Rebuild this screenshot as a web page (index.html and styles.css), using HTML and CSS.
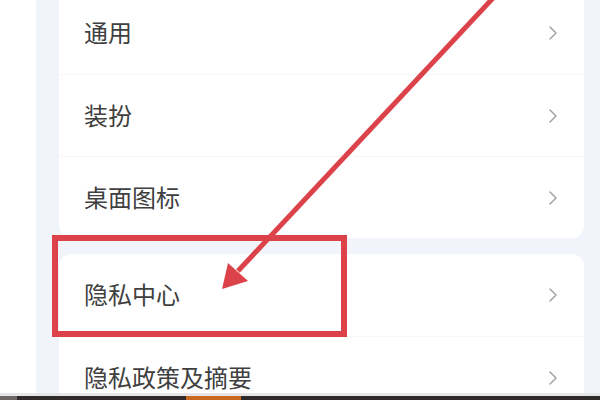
FILE: index.html
```
<!DOCTYPE html>
<html lang="zh-CN">
<head>
<meta charset="utf-8">
<link rel="stylesheet" href="styles.css">
</head>
<body>
<div class="frame">
  <div class="screen">
    <div class="edge"></div>
    <div class="content">
      <div class="card card-top">
        <div class="row"><span class="label">通用</span><svg class="chev" viewBox="0 0 8 14" width="8" height="14"><path d="M1 1 L7 7 L1 13" fill="none" stroke="#a3a3a3" stroke-width="1.5" stroke-linecap="round" stroke-linejoin="round"/></svg></div>
        <div class="row"><span class="label">装扮</span><svg class="chev" viewBox="0 0 8 14" width="8" height="14"><path d="M1 1 L7 7 L1 13" fill="none" stroke="#a3a3a3" stroke-width="1.5" stroke-linecap="round" stroke-linejoin="round"/></svg></div>
        <div class="row"><span class="label">桌面图标</span><svg class="chev" viewBox="0 0 8 14" width="8" height="14"><path d="M1 1 L7 7 L1 13" fill="none" stroke="#a3a3a3" stroke-width="1.5" stroke-linecap="round" stroke-linejoin="round"/></svg></div>
      </div>
      <div class="card">
        <div class="row"><span class="label">隐私中心</span><svg class="chev" viewBox="0 0 8 14" width="8" height="14"><path d="M1 1 L7 7 L1 13" fill="none" stroke="#a3a3a3" stroke-width="1.5" stroke-linecap="round" stroke-linejoin="round"/></svg></div>
        <div class="row"><span class="label">隐私政策及摘要</span><svg class="chev" viewBox="0 0 8 14" width="8" height="14"><path d="M1 1 L7 7 L1 13" fill="none" stroke="#a3a3a3" stroke-width="1.5" stroke-linecap="round" stroke-linejoin="round"/></svg></div>
      </div>
    </div>
    <svg class="annot" viewBox="0 0 600 393" width="600" height="393">
      <rect x="55" y="238" width="289" height="96" fill="none" stroke="#dc4249" stroke-width="6"/>
      <line x1="494" y1="-3" x2="238" y2="271" stroke="#dc4249" stroke-width="5"/>
      <polygon points="222,289 228,263 248,281" fill="#dc4249"/>
    </svg>
  </div>
  <div class="taskbar">
    <div class="tb-left"></div>
    <div class="tb-dark"></div>
    <div class="tb-orange"></div>
    <div class="tb-dark tb-fill"></div>
  </div>
</div>
</body>
</html>
```
FILE: styles.css
```
html, body {
  margin: 0;
  padding: 0;
  background: #ffffff;
}
.frame {
  width: 600px;
  height: 400px;
  overflow: hidden;
  display: flex;
  flex-direction: column;
  font-family: "Noto Sans CJK SC", "Noto Sans", sans-serif;
}
.screen {
  position: relative;
  height: 393px;
  display: flex;
  overflow: hidden;
  border-bottom: 3px solid #e6e6e8;
  box-sizing: content-box;
}
.edge {
  width: 36px;
  flex: none;
  background: #ffffff;
}
.content {
  flex: 1;
  background: #f1f4fb;
  padding: 0 16px 0 23px;
  display: flex;
  flex-direction: column;
  gap: 16px;
}
.card {
  background: #ffffff;
  border-radius: 12px;
  flex: none;
}
.card-top {
  margin-top: -8px;
  border-radius: 0 0 12px 12px;
}
.row {
  height: 82px;
  display: flex;
  align-items: center;
  justify-content: space-between;
  padding: 0 27px 2px 25px;
  box-sizing: border-box;
  border-top: 1px solid #f7f7f9;
}
.row:first-child {
  border-top: none;
}
.label {
  font-size: 24px;
  line-height: 1;
  color: #404040;
}
.chev {
  display: block;
  margin-top: 2px;
}
.annot {
  position: absolute;
  left: 0;
  top: 0;
  pointer-events: none;
}
.taskbar {
  height: 4px;
  display: flex;
  flex: none;
}
.tb-left {
  width: 17px;
  background: #6b6866;
}
.tb-dark {
  width: 169px;
  background: #2f2b2b;
}
.tb-orange {
  width: 55px;
  background: #c8691f;
}
.tb-fill {
  flex: 1;
  width: auto;
}
```
